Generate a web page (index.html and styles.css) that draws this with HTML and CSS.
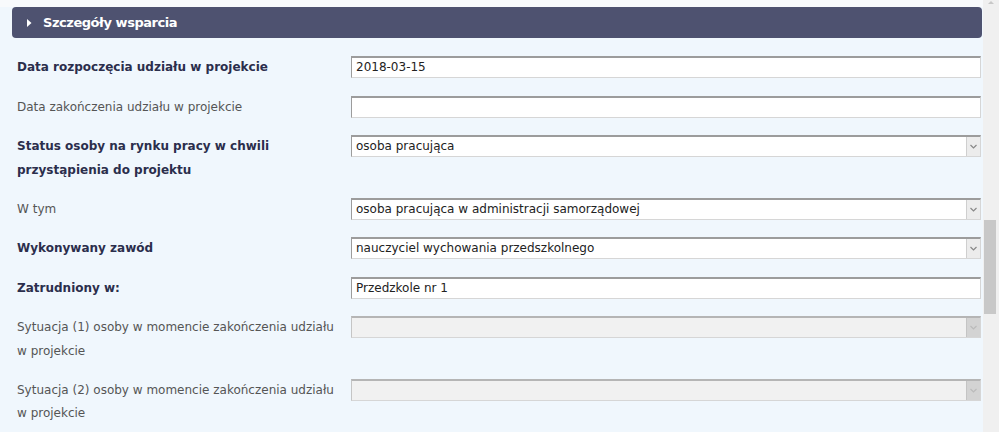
FILE: index.html
```html
<!DOCTYPE html>
<html lang="pl">
<head>
<meta charset="utf-8">
<title>Szczegóły wsparcia</title>
<link rel="stylesheet" href="styles.css">
</head>
<body>
<div class="page">
  <main class="main">
    <div class="panel-header">
      <svg class="caret" width="5" height="8" viewBox="0 0 5 8"><path d="M0 0 L4.5 4 L0 8 Z" fill="#fff"/></svg>
      <span>Szczegóły wsparcia</span>
    </div>
    <div class="form">
      <div class="row">
        <div class="label bold">Data rozpoczęcia udziału w projekcie</div>
        <div class="field"><div class="input">2018-03-15</div></div>
      </div>
      <div class="row">
        <div class="label">Data zakończenia udziału w projekcie</div>
        <div class="field"><div class="input"></div></div>
      </div>
      <div class="row">
        <div class="label bold">Status osoby na rynku pracy w chwili przystąpienia do projektu</div>
        <div class="field"><div class="input select"><span>osoba pracująca</span><span class="arrow"><svg width="7" height="5" viewBox="0 0 7 5"><path d="M0.5 1 L3.5 4 L6.5 1" fill="none" stroke="#888" stroke-width="1.2"/></svg></span></div></div>
      </div>
      <div class="row">
        <div class="label">W tym</div>
        <div class="field"><div class="input select"><span>osoba pracująca w administracji samorządowej</span><span class="arrow"><svg width="7" height="5" viewBox="0 0 7 5"><path d="M0.5 1 L3.5 4 L6.5 1" fill="none" stroke="#888" stroke-width="1.2"/></svg></span></div></div>
      </div>
      <div class="row">
        <div class="label bold">Wykonywany zawód</div>
        <div class="field"><div class="input select"><span>nauczyciel wychowania przedszkolnego</span><span class="arrow"><svg width="7" height="5" viewBox="0 0 7 5"><path d="M0.5 1 L3.5 4 L6.5 1" fill="none" stroke="#888" stroke-width="1.2"/></svg></span></div></div>
      </div>
      <div class="row">
        <div class="label bold">Zatrudniony w:</div>
        <div class="field"><div class="input">Przedzkole nr 1</div></div>
      </div>
      <div class="row">
        <div class="label">Sytuacja (1) osoby w momencie zakończenia udziału w projekcie</div>
        <div class="field"><div class="input select disabled"><span></span><span class="arrow"><svg width="7" height="5" viewBox="0 0 7 5"><path d="M0.5 1 L3.5 4 L6.5 1" fill="none" stroke="#bbb" stroke-width="1.2"/></svg></span></div></div>
      </div>
      <div class="row">
        <div class="label">Sytuacja (2) osoby w momencie zakończenia udziału w projekcie</div>
        <div class="field"><div class="input select disabled"><span></span><span class="arrow"><svg width="7" height="5" viewBox="0 0 7 5"><path d="M0.5 1 L3.5 4 L6.5 1" fill="none" stroke="#bbb" stroke-width="1.2"/></svg></span></div></div>
      </div>
    </div>
  </main>
  <aside class="scrollbar">
    <div class="scroll-up"></div>
    <div class="thumb"></div>
  </aside>
</div>
</body>
</html>
```
FILE: styles.css
```css
html, body {
  margin: 0;
  padding: 0;
  height: 100%;
  overflow: hidden;
}
body {
  font-family: "DejaVu Sans", "Liberation Sans", sans-serif;
  font-size: 12px;
  background: #f0f7fd;
}
.page {
  display: flex;
  height: 432px;
}
.main {
  flex: 1;
  padding: 7px 1px 0 12px;
  background: linear-gradient(#f8fafc 0, #f8fafc 7px, #f0f7fd 7px);
}
.panel-header {
  height: 31px;
  background: #4e5270;
  border-radius: 4px;
  display: flex;
  align-items: center;
  color: #fff;
  font-weight: bold;
  font-size: 13px;
  letter-spacing: -0.45px;
  padding-left: 15px;
}
.caret {
  margin-right: 11px;
}
.form {
  padding-top: 18px;
}
.row {
  display: grid;
  grid-template-columns: 339px 1fr;
  padding-bottom: 15.5px;
}
.label {
  padding-left: 5px;
  padding-right: 12px;
  line-height: 23.5px;
  color: #555555;
}
.label.bold {
  font-weight: bold;
  color: #2b2e4c;
}
.field {
  padding-right: 1px;
  min-height: 24px;
}
.input {
  box-sizing: border-box;
  height: 22px;
  background: #fff;
  border-top: 2px solid #9c9c9c;
  border-left: 1px solid #9c9c9c;
  border-right: 1px solid #d6d6d6;
  border-bottom: 1px solid #d6d6d6;
  padding: 0 4px;
  line-height: 19px;
  color: #222;
  display: flex;
  align-items: center;
}
.select {
  padding-right: 0;
  justify-content: space-between;
}
.arrow {
  width: 14px;
  height: 19px;
  box-sizing: border-box;
  background: #ececec;
  border-left: 1px solid #cfcfcf;
  display: flex;
  align-items: center;
  justify-content: center;
}
.disabled {
  background: #f1f1f1;
  border-top-color: #b5b5b5;
  border-left-color: #c5c5c5;
}
.disabled .arrow {
  background: #d3d3d3;
  border-left-color: #c4c4c4;
}
.scrollbar {
  width: 16px;
  background: #f0f0f0;
  display: flex;
  flex-direction: column;
  align-items: center;
}
.scroll-up {
  width: 0;
  height: 0;
  border-left: 3px solid transparent;
  border-right: 3px solid transparent;
  border-bottom: 3px solid #c8c8c8;
  margin-top: 1px;
}
.thumb {
  width: 12px;
  height: 94px;
  margin-top: 216px;
  background: #c8c8c8;
  margin-left: -2px;
}
```
